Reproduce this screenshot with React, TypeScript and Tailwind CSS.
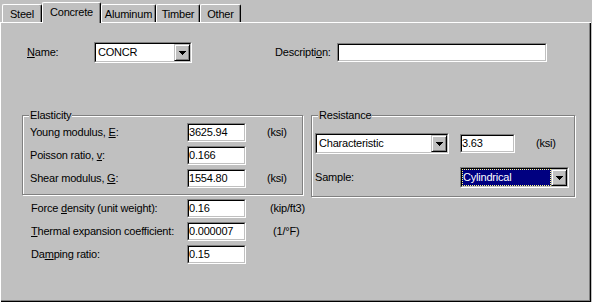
import React from "react";

function Arrow() {
  return (
    <svg width="7" height="4" viewBox="0 0 7 4" shapeRendering="crispEdges">
      <path d="M0 0h7v1h-7z M1 1h5v1h-5z M2 2h3v1h-3z M3 3h1v1h-1z" fill="#000" />
    </svg>
  );
}

function Sunken({ className, inner, children }: { className: string; inner?: string; children?: React.ReactNode }) {
  return (
    <div className={`shrink-0 border border-t-[#808080] border-l-[#808080] border-r-white border-b-white ${className}`}>
      <div className={`h-full w-full border border-t-black border-l-black border-r-[#c0c0c0] border-b-[#c0c0c0] bg-white flex items-center ${inner ?? ""}`}>
        {children}
      </div>
    </div>
  );
}

function Input({ w, value }: { w: string; value?: string }) {
  return (
    <Sunken className={`${w} h-[19px]`} inner="pl-[0px] leading-[13px]">
      <span className="whitespace-nowrap">{value}</span>
    </Sunken>
  );
}

function Combo({ w, value, focused }: { w: string; value: string; focused?: boolean }) {
  return (
    <Sunken className={`${w} h-[21px]`} inner="items-stretch">
      {focused ? (
        <div className="flex-1 flex items-center bg-[#000080] text-white border border-dotted border-[#ffff80] leading-[13px] pl-[0px]">
          {value}
        </div>
      ) : (
        <div className="flex-1 flex items-center leading-[13px] pl-[2px]">{value}</div>
      )}
      <div className="w-[16px] flex items-center justify-center bg-[#c0c0c0] border border-t-[#c0c0c0] border-l-[#c0c0c0] border-r-black border-b-black shadow-[inset_1px_1px_0_#fff,inset_-1px_-1px_0_#808080]">
        <Arrow />
      </div>
    </Sunken>
  );
}

function Tab({ w, label, selected }: { w: string; label: string; selected?: boolean }) {
  if (selected) {
    return (
      <div
        className={`${w} h-[21px] -mb-[1px] relative z-10 bg-[#c0c0c0] flex items-center justify-center pb-[2px] rounded-t-[2px] border-t border-l border-t-white border-l-white border-r border-r-black shadow-[inset_-1px_0_0_#808080]`}
      >
        {label}
      </div>
    );
  }
  return (
    <div
      className={`${w} h-[18px] bg-[#c0c0c0] flex items-center justify-center pt-[1px] rounded-t-[2px] border-t border-l border-t-white border-l-white border-r border-r-black shadow-[inset_-1px_0_0_#808080]`}
    >
      {label}
    </div>
  );
}

function Group({ className, title, children }: { className: string; title: string; children?: React.ReactNode }) {
  return (
    <div className={`shrink-0 border border-[#808080] shadow-[1px_1px_0_#fff,inset_1px_1px_0_#fff] ${className}`}>
      <div className="-mt-[7px] ml-[6px] px-[1px] bg-[#c0c0c0] w-fit leading-[13px]">{title}</div>
      {children}
    </div>
  );
}

export default function App() {
  return (
    <div className="w-[592px] h-[302px] bg-[#c0c0c0] text-black text-[11px] tracking-[-0.2px] font-['Liberation_Sans',Arial,sans-serif] flex flex-col overflow-hidden">
      <div className="h-[22px] flex items-end pl-[2px] shrink-0">
        <Tab w="w-[40px]" label="Steel" />
        <Tab w="w-[59px]" label="Concrete" selected />
        <Tab w="w-[55px]" label="Aluminum" />
        <Tab w="w-[44px]" label="Timber" />
        <Tab w="w-[41px]" label="Other" />
      </div>
      <div className="w-[591px] h-[280px] shrink-0 flex flex-col shadow-[inset_1px_1px_0_#fff,inset_-1px_-1px_0_#000,inset_-2px_-2px_0_#808080]">
        <div className="mt-[20px] h-[21px] flex items-center pl-[27px]">
          <div className="w-[67px] shrink-0">
            <u>N</u>ame:
          </div>
          <Combo w="w-[98px]" value="CONCR" />
          <div className="ml-[83px] w-[62px] shrink-0">
            Descripti<u>o</u>n:
          </div>
          <Input w="w-[210px]" />
        </div>

        <div className="mt-[52px] flex items-start pl-[22px]">
          <Group className="w-[281px] h-[80px]" title="Elasticity">
            <div className="mt-[1px] flex flex-col gap-[4px] pl-[7px]">
              <div className="h-[19px] flex items-center">
                <div className="w-[157px] shrink-0">
                  Young modulus, <u>E</u>:
                </div>
                <Input w="w-[59px]" value="3625.94" />
                <div className="ml-[21px]">(ksi)</div>
              </div>
              <div className="h-[19px] flex items-center">
                <div className="w-[157px] shrink-0">
                  Poisson ratio, <u>v</u>:
                </div>
                <Input w="w-[59px]" value="0.166" />
              </div>
              <div className="h-[19px] flex items-center">
                <div className="w-[157px] shrink-0">
                  Shear modulus, <u>G</u>:
                </div>
                <Input w="w-[59px]" value="1554.80" />
                <div className="ml-[21px]">(ksi)</div>
              </div>
            </div>
          </Group>
          <Group className="ml-[8px] w-[264px] h-[82px]" title="Resistance">
            <div className="mt-[11px] h-[21px] flex items-center pl-[3px]">
              <Combo w="w-[134px]" value="Characteristic" />
              <div className="ml-[11px]">
                <Input w="w-[55px]" value="3.63" />
              </div>
              <div className="ml-[21px]">(ksi)</div>
            </div>
            <div className="mt-[13px] h-[21px] flex items-center pl-[3px]">
              <div className="w-[145px] shrink-0">Sample:</div>
              <Combo w="w-[109px]" value="Cylindrical" focused />
            </div>
          </Group>
        </div>

        <div className="mt-[2px] flex flex-col gap-[4px] pl-[31px]">
          <div className="h-[19px] flex items-center">
            <div className="w-[156px] shrink-0">
              Force <u>d</u>ensity (unit weight):
            </div>
            <Input w="w-[59px]" value="0.16" />
            <div className="ml-[24px]">(kip/ft3)</div>
          </div>
          <div className="h-[19px] flex items-center">
            <div className="w-[156px] shrink-0">
              <u>T</u>hermal expansion coefficient:
            </div>
            <Input w="w-[59px]" value="0.000007" />
            <div className="ml-[27px]">(1/°F)</div>
          </div>
          <div className="h-[19px] flex items-center">
            <div className="w-[156px] shrink-0">
              Da<u>m</u>ping ratio:
            </div>
            <Input w="w-[59px]" value="0.15" />
          </div>
        </div>
      </div>
    </div>
  );
}
